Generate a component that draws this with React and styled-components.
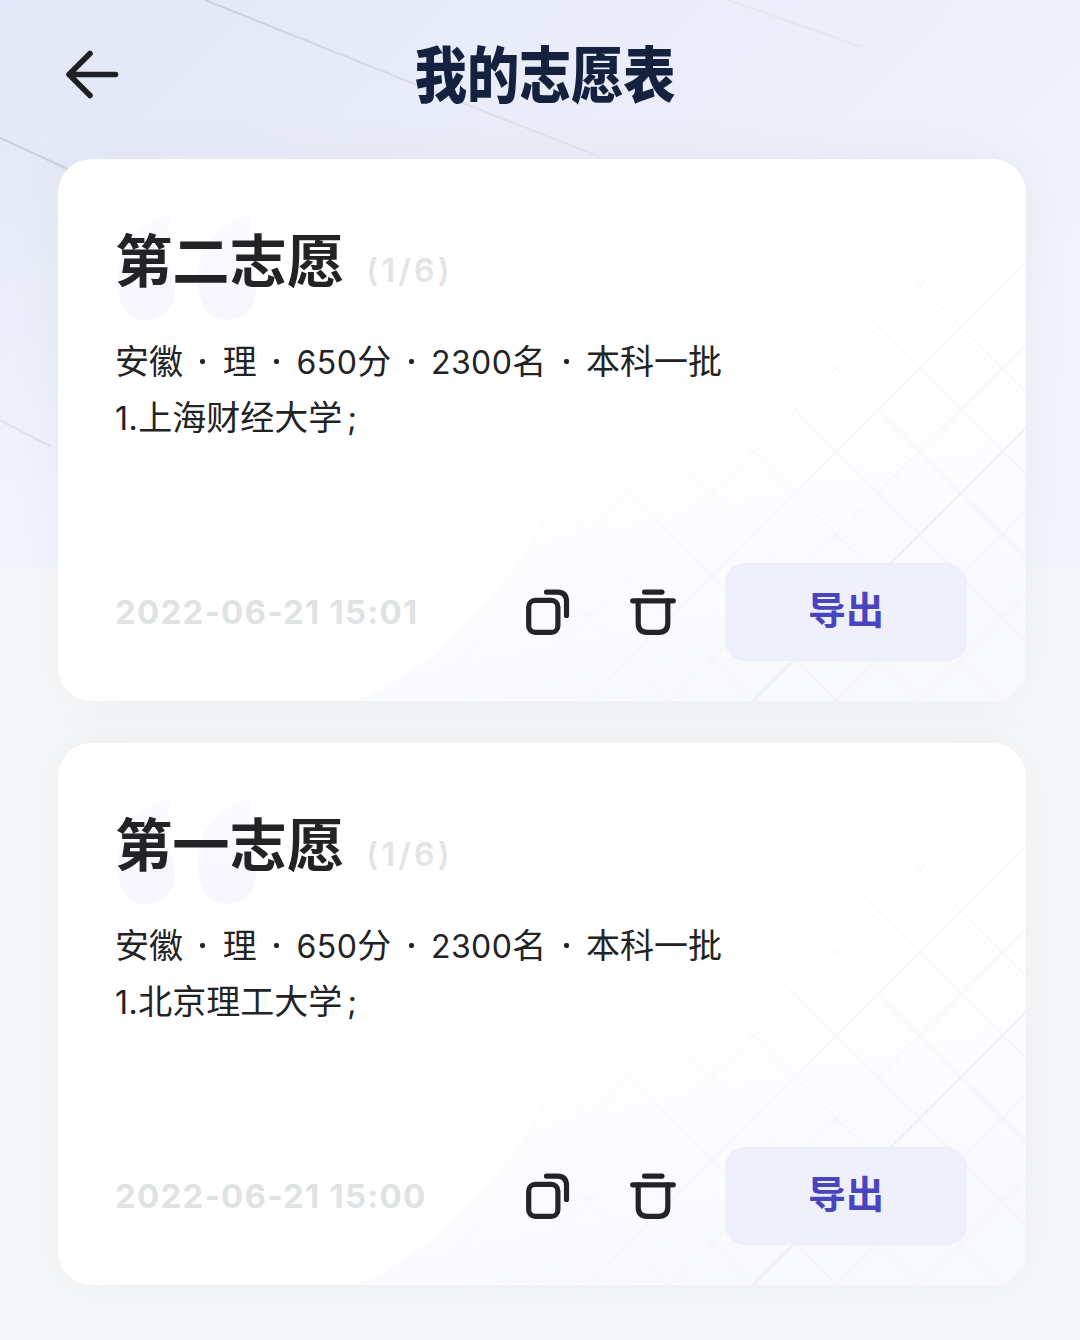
import React from 'react'
import styled, { createGlobalStyle } from 'styled-components'

const GlobalStyle = createGlobalStyle`
    * {
        box-sizing: border-box;
    }
    body {
        margin: 0;
        background: #f6f7f9;
        font-family: "Noto Sans CJK SC", sans-serif;
        color: #222325;
    }
`

const Page = styled.div`
    position: relative;
    width: 1080px;
    height: 1340px;
    overflow: hidden;
    background: #f6f7f9;
`

const Sky = styled.svg`
    position: absolute;
    top: 0;
    left: 0;
`

const Header = styled.header`
    position: relative;
    display: grid;
    grid-template-columns: 126px 1fr 126px;
    align-items: center;
    height: 159px;
    padding-bottom: 11px;
`

const BackButton = styled.button`
    display: flex;
    justify-content: flex-end;
    padding: 0 5px 0 0;
    border: 0;
    background: none;
`

const Title = styled.h1`
    margin: 0;
    padding: 0 0 5px 12px;
    font-size: 61px;
    line-height: 80px;
    font-weight: 900;
    text-align: center;
    white-space: nowrap;
    color: #14213f;
    transform: scaleX(0.855);
`

const List = styled.main`
    position: relative;
    display: flex;
    flex-direction: column;
    gap: 42px;
    padding: 0 54px 0 58px;
`

const Card = styled.section`
    position: relative;
    display: flex;
    flex-direction: column;
    height: 542px;
    padding: 56px 59px 40px 57px;
    border-radius: 34px;
    background: #fff;
    box-shadow: 0 0 52px rgba(90, 96, 80, 0.06);
    overflow: hidden;
`

const CardArt = styled.svg`
    position: absolute;
    top: 0;
    left: 0;
`

const CardHead = styled.div`
    position: relative;
    display: flex;
    align-items: baseline;
    height: 117px;
`

const CardName = styled.h2`
    margin: 0;
    font-size: 57.3px;
    line-height: 86px;
    font-weight: 700;
`

const Count = styled.span`
    margin-left: 22px;
    font-family: Inter, sans-serif;
    font-size: 32px;
    font-weight: 600;
    letter-spacing: 3.4px;
    color: #e2e4e5;
`

const Info = styled.div`
    position: relative;
    font-size: 34px;
    line-height: 56px;
    font-weight: 400;
    white-space: nowrap;
`

const Num = styled.span`
    font-family: Inter, sans-serif;
    font-size: 32px;
    line-height: 1;
    letter-spacing: ${(props) => props.$tight ? "0.5px" : "0.4px"};
`

const Semicolon = styled(Num)`
    margin-left: 5px;
`

const Dot = styled.i`
    display: inline-block;
    width: 5px;
    height: 5px;
    margin: 0 17.4px;
    border-radius: 2px;
    background: #222325;
    vertical-align: 10px;
`

const CardFoot = styled.div`
    position: relative;
    display: flex;
    align-items: center;
    height: 98px;
    margin-top: auto;
`

const Time = styled.time`
    flex: 1;
    font-family: Inter, sans-serif;
    font-size: 33px;
    font-weight: 700;
    letter-spacing: 1.2px;
    white-space: nowrap;
    color: #e0e3e4;
`

const IconButton = styled.button`
    display: flex;
    padding: 0;
    margin-right: ${(props) => props.$gap};
    border: 0;
    background: none;
`

const ExportButton = styled.button`
    width: 242px;
    height: 98px;
    padding: 0 0 10px;
    border: 0;
    border-radius: 20px;
    background: rgba(237, 238, 252, 0.88);
    font-family: "Noto Sans CJK SC", sans-serif;
    font-size: 38px;
    font-weight: 600;
    color: #4745bf;
`

const BackIcon = () => (
    <svg width="56" height="52" viewBox="0 0 56 52" fill="none" stroke="#1f2022" strokeWidth="5.6" strokeLinecap="round" strokeLinejoin="round">
        <path d="M50.5 26.5H5M25 5.5L4 26.5L25 47.5" />
    </svg>
)

const CopyIcon = () => (
    <svg width="44" height="46" viewBox="0 0 44 46" fill="none" stroke="#222427" strokeWidth="5.2" strokeLinecap="round">
        <rect x="2.7" y="11.4" width="29.2" height="32" rx="6.5" />
        <path d="M20.5 3.1H31.5Q40.5 3.1 40.5 12.5V26.5" />
    </svg>
)

const TrashIcon = () => (
    <svg width="46" height="46" viewBox="0 0 46 46" fill="none" stroke="#222427" strokeWidth="5.2" strokeLinecap="round">
        <path d="M14.5 3.1H32M2.7 11.8H43.3" />
        <path d="M8.2 11.8V34Q8.2 43.4 17.4 43.4H28.6Q37.8 43.4 37.8 34V11.8" />
    </svg>
)

const Background = () => (
    <Sky width="1080" height="620" viewBox="0 0 1080 620">
        <defs>
            <linearGradient id="sky" x1="0" y1="0" x2="1" y2="0.5">
                <stop offset="0" stopColor="#e2e8f7" />
                <stop offset="0.4" stopColor="#e9ecf9" />
                <stop offset="0.75" stopColor="#edf0fb" />
                <stop offset="1" stopColor="#f1f3fd" />
            </linearGradient>
            <linearGradient id="skyLow" x1="0" y1="0" x2="0" y2="1">
                <stop offset="0.2" stopColor="#f0f2fd" stopOpacity="0" />
                <stop offset="1" stopColor="#f3f5fe" />
            </linearGradient>
            <linearGradient id="ray" gradientUnits="userSpaceOnUse" x1="200" y1="0" x2="610" y2="160">
                <stop offset="0" stopColor="#cbcfde" />
                <stop offset="1" stopColor="#e4e6f1" />
            </linearGradient>
        </defs>
        <rect width="1080" height="568" fill="url(#sky)" />
        <rect width="1080" height="568" fill="url(#skyLow)" />
        <path d="M205 0L412 83L600 157" fill="none" stroke="url(#ray)" strokeWidth="2" />
        <path d="M0 138L70 170" stroke="#ccd0dd" strokeWidth="2" />
        <path d="M728 0L862 47" stroke="#e4e7f2" strokeWidth="2" />
        <path d="M0 420L50 446" stroke="#dfe2ed" strokeWidth="2" />
    </Sky>
)

// 45 degree grid, one line each 83px along the x axis
const downLeft = [905, 988, 1071, 1154, 1237, 1320, 1403]
const downRight = [71, 154, 237, 320, 403, 486, 569, 652, 735]

const CardBackground = ({ id }) => (
    <CardArt width="968" height="542" viewBox="0 0 968 542">
        <defs>
            <linearGradient id={`glow${id}`} gradientUnits="userSpaceOnUse" x1="560" y1="160" x2="640" y2="542">
                <stop offset="0.1" stopColor="#fafbfe" stopOpacity="0" />
                <stop offset="1" stopColor="#f8f9fd" />
            </linearGradient>
            <linearGradient id={`fade${id}`} gradientUnits="userSpaceOnUse" x1="600" y1="130" x2="880" y2="400">
                <stop offset="0.1" stopColor="#fff" stopOpacity="0" />
                <stop offset="1" stopColor="#fff" />
            </linearGradient>
            <mask id={`mask${id}`}>
                <rect width="968" height="542" fill={`url(#fade${id})`} />
            </mask>
            <linearGradient id={`quote${id}`} x1="0" y1="0" x2="0" y2="1">
                <stop offset="0" stopColor="#fafbff" />
                <stop offset="1" stopColor="#f8f6fe" />
            </linearGradient>
        </defs>
        <path d="M300 542C370 510 425 455 465 395C515 310 590 150 740 90L968 60V542Z" fill={`url(#glow${id})`} />
        <g mask={`url(#mask${id})`} stroke="#f3f4f7" strokeWidth="1.5">
            {downLeft.map((c) => (
                <path key={c} d={`M${c} 0L${c - 542} 542`} stroke={c === 1237 ? "#ebecef" : undefined} />
            ))}
            {downRight.map((c) => (
                <path key={c} d={`M${c} 0L${c + 542} 542`} />
            ))}
        </g>
        <g fill={`url(#quote${id})`}>
            <path d="M113 54C82 62 59 88 59 118C59 145 70 161 87 161C106 161 117 148 117 132C117 115 109 104 109 101C109 82 110 68 113 54Z" />
            <path d="M194 54C162 62 139 88 139 118C139 145 151 161 169 161C187 161 198 148 198 132C198 115 190 104 190 101C190 82 191 68 194 54Z" />
        </g>
    </CardArt>
)

const plans = [
    { id: 2, name: "第二志愿", school: "上海财经大学", time: "2022-06-21 15:01" },
    { id: 1, name: "第一志愿", school: "北京理工大学", time: "2022-06-21 15:00" },
]

const PlanCard = ({ plan }) => (
    <Card>
        <CardBackground id={plan.id} />
        <CardHead>
            <CardName>{plan.name}</CardName>
            <Count>(1/6)</Count>
        </CardHead>
        <Info>安徽<Dot />理<Dot /><Num>650</Num>分<Dot /><Num>2300</Num>名<Dot />本科一批</Info>
        <Info><Num $tight>1.</Num>{plan.school}<Semicolon>;</Semicolon></Info>
        <CardFoot>
            <Time>{plan.time}</Time>
            <IconButton $gap="60px" aria-label="复制"><CopyIcon /></IconButton>
            <IconButton $gap="49px" aria-label="删除"><TrashIcon /></IconButton>
            <ExportButton>导出</ExportButton>
        </CardFoot>
    </Card>
)

const App = () => {
    return (
        <>
            <GlobalStyle />
            <Page>
                <Background />
                <Header>
                    <BackButton aria-label="返回"><BackIcon /></BackButton>
                    <Title>我的志愿表</Title>
                </Header>
                <List>
                    {plans.map((plan) => <PlanCard key={plan.id} plan={plan} />)}
                </List>
            </Page>
        </>
    )
}

export default App
